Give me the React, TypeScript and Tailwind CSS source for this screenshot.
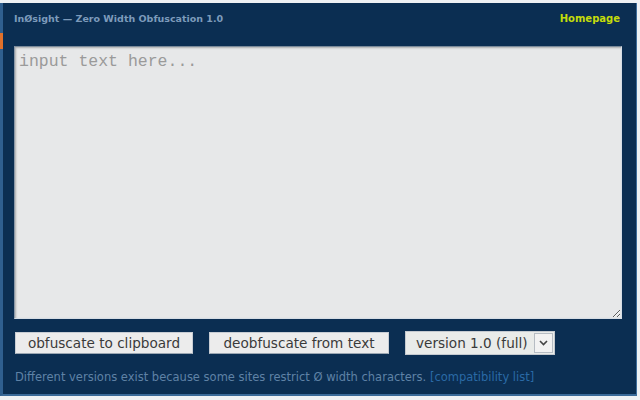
import React from "react";

export default function App() {
  return (
    <div className="w-[640px] h-[400px] bg-[#eef1f4] overflow-hidden flex flex-col">
      <div className="mt-[3px] mr-[3px] h-[393px] flex bg-[#0b2e52] border-l-[3px] border-[#2f5f8f] border-r border-r-[#3e6d9c] border-b-2 border-b-[#3a6a99] relative">
        {/* small accent on the left edge */}
        <div className="absolute left-[-3px] top-[30px] w-[3px] h-[16px] bg-[#e0702a]" />
        <div className="flex-1 flex flex-col pl-[11px] pr-[12px]">
          <div className="h-[43px] flex items-start justify-between pt-[9px]" style={{ fontFamily: '"DejaVu Sans", Verdana, sans-serif' }}>
            <span className="text-[9.5px] font-bold text-[#7d9bbb] leading-[14px]">
              InØsight — Zero Width Obfuscation 1.0
            </span>
            <a className="text-[10px] font-bold text-[#c4dc0a] mr-[4px] leading-[14px]">Homepage</a>
          </div>
          <textarea
            className="w-[608px] h-[273px] resize-y bg-[#e7e8e9] border border-[#d6dde5] border-t-[#7a8a9a] border-l-[#8a98a8] shadow-[inset_1px_1px_2px_rgba(0,0,0,0.25)] px-[4px] py-[3px] text-[16.5px] text-[#777] placeholder:text-[#9a9a9a] outline-none"
            style={{ fontFamily: '"Liberation Mono", "Courier New", monospace' }}
            placeholder="input text here..."
          />
          <div className="flex items-center mt-[12px] gap-[16px]" style={{ fontFamily: '"DejaVu Sans", Verdana, sans-serif' }}>
            <button className="w-[178px] h-[22px] bg-[#ececec] border border-[#c8cdd4] border-b-[#9aa6b2] text-[13.6px] text-[#3a3a3a] flex items-center justify-center ml-[1px]">
              obfuscate to clipboard
            </button>
            <button className="w-[180px] h-[22px] bg-[#ececec] border border-[#c8cdd4] border-b-[#9aa6b2] text-[13.6px] text-[#3a3a3a] flex items-center justify-center">
              deobfuscate from text
            </button>
            <div className="w-[150px] h-[24px] bg-[#e9ebe9] border border-[#c4c9cf] flex items-center">
              <span className="flex-1 text-[13.6px] text-[#3a3a3a] pl-[10px] whitespace-nowrap">version 1.0 (full)</span>
              <span className="w-[19px] h-[20px] mr-[1px] bg-[#f2f2f2] border border-[#b6bcc3] flex items-center justify-center">
                <svg width="9" height="6" viewBox="0 0 9 6">
                  <path d="M1 1 L4.5 4.5 L8 1" fill="none" stroke="#444" strokeWidth="1.6" />
                </svg>
              </span>
            </div>
          </div>
          <div className="mt-[14px] text-[11.5px] text-[#5f82a6] ml-[1px] whitespace-nowrap" style={{ fontFamily: '"DejaVu Sans", Verdana, sans-serif' }}>
            Different versions exist because some sites restrict Ø width characters.{" "}
            <span className="text-[#2a6aa6]">[compatibility list]</span>
          </div>
        </div>
      </div>
    </div>
  );
}
